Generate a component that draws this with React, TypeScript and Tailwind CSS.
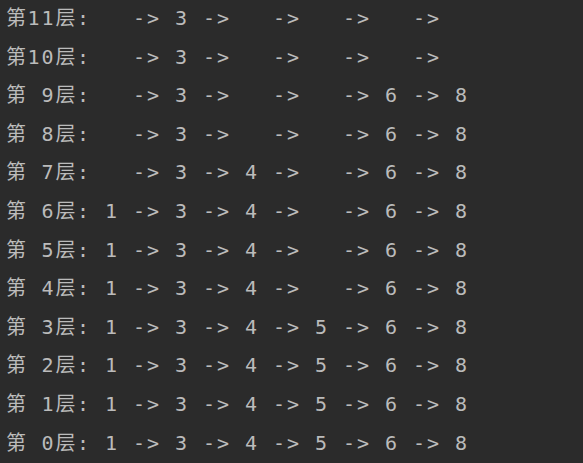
import React from "react";

const rows: [string, string][] = [
  ["11", "  -> 3 ->   ->   ->   ->"],
  ["10", "  -> 3 ->   ->   ->   ->"],
  [" 9", "  -> 3 ->   ->   -> 6 -> 8"],
  [" 8", "  -> 3 ->   ->   -> 6 -> 8"],
  [" 7", "  -> 3 -> 4 ->   -> 6 -> 8"],
  [" 6", "1 -> 3 -> 4 ->   -> 6 -> 8"],
  [" 5", "1 -> 3 -> 4 ->   -> 6 -> 8"],
  [" 4", "1 -> 3 -> 4 ->   -> 6 -> 8"],
  [" 3", "1 -> 3 -> 4 -> 5 -> 6 -> 8"],
  [" 2", "1 -> 3 -> 4 -> 5 -> 6 -> 8"],
  [" 1", "1 -> 3 -> 4 -> 5 -> 6 -> 8"],
  [" 0", "1 -> 3 -> 4 -> 5 -> 6 -> 8"],
];

export default function App() {
  return (
    <div className="w-[583px] h-[463px] overflow-hidden bg-[#2b2b2b]">
      <div className="flex flex-col pl-[6px] -mt-[2px] text-[20px] leading-[38.6px] text-[#bbbbbb] whitespace-pre tracking-[1.96px] font-['DejaVu_Sans_Mono',monospace]">
        {rows.map(([n, rest], i) => (
          <div key={i} className="h-[38.6px] shrink-0">
            <span className="tracking-[1.5px] font-['Noto_Sans_CJK_SC',sans-serif]">第</span>
            <span>{n}</span>
            <span className="tracking-[1.5px] font-['Noto_Sans_CJK_SC',sans-serif]">层</span>
            <span>{": " + rest}</span>
          </div>
        ))}
      </div>
    </div>
  );
}
